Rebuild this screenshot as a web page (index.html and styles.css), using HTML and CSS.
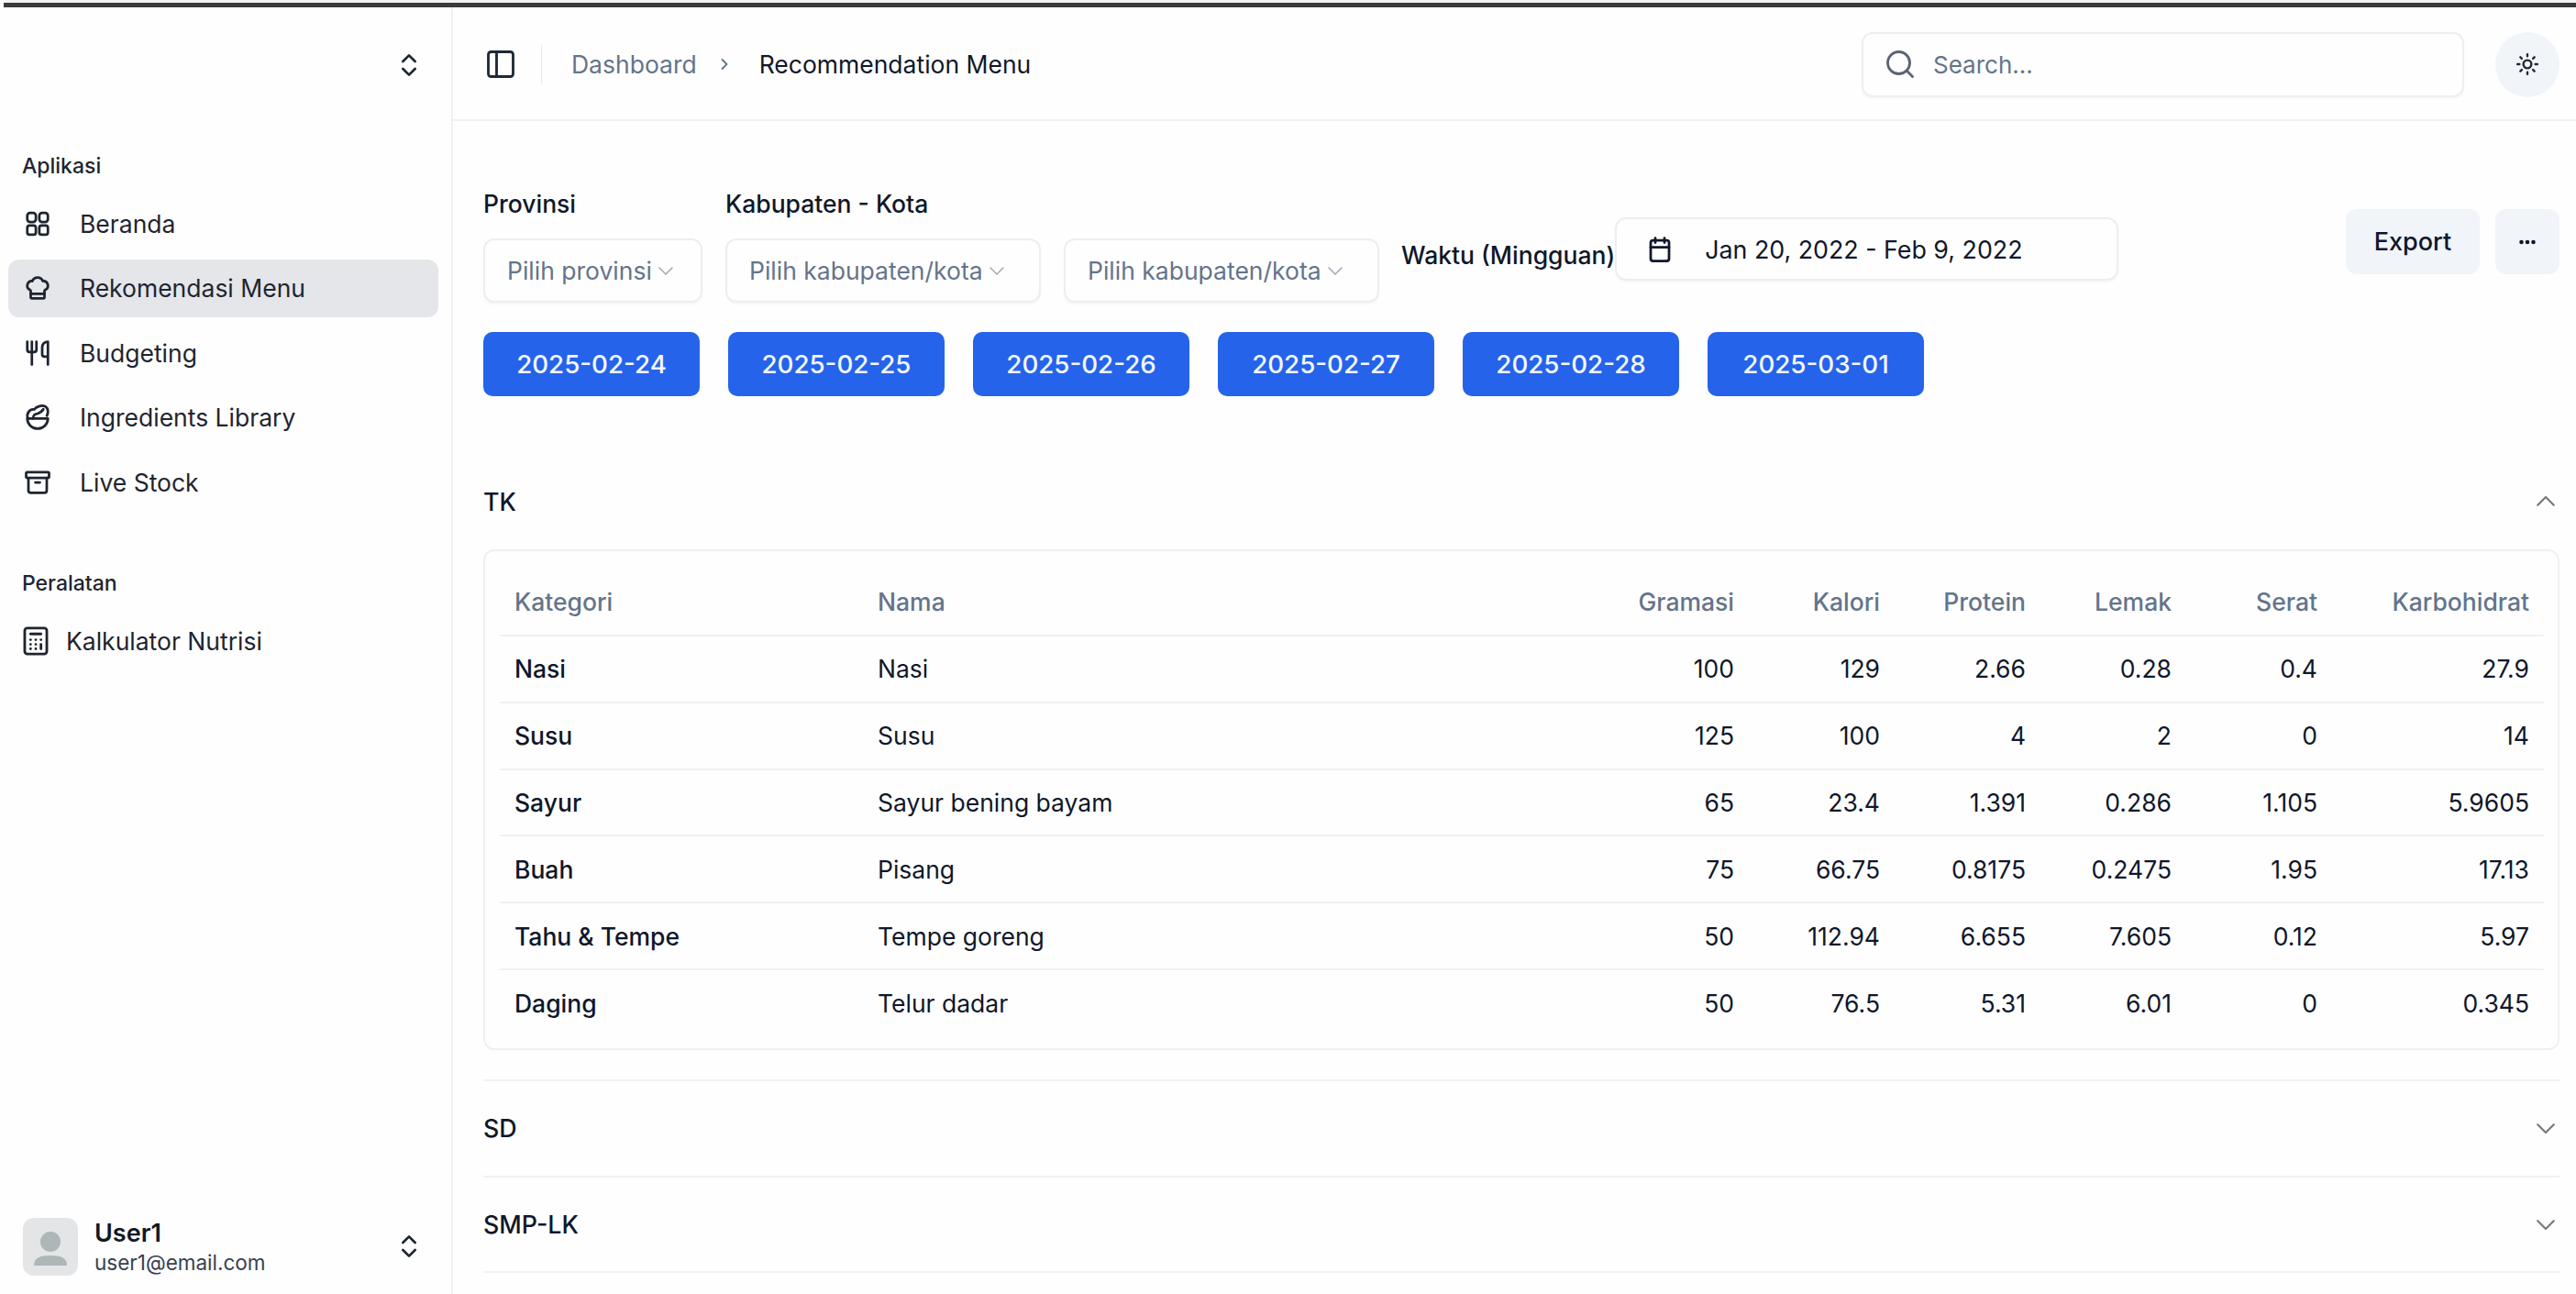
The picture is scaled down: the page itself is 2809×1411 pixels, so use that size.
FILE: index.html
```html
<!DOCTYPE html>
<html lang="id">
<head>
<meta charset="utf-8">
<title>Recommendation Menu</title>
<link rel="stylesheet" href="styles.css">
</head>
<body>
<div class="topstrip"></div>
<div class="app">
  <aside class="sidebar">
    <div class="brand">
      <svg class="ic updown" viewBox="0 0 24 24"><path d="m7 15 5 5 5-5"/><path d="m7 9 5-5 5 5"/></svg>
    </div>
    <div class="group-label">Aplikasi</div>
    <nav class="nav">
      <a class="item"><svg class="ic" viewBox="0 0 24 24"><rect x="3" y="2.5" width="7.5" height="8" rx="2.5"/><rect x="13.5" y="2.5" width="7.5" height="8" rx="2.5"/><rect x="3" y="13.5" width="7.5" height="8" rx="2"/><rect x="13.5" y="13.5" width="7.5" height="8" rx="2"/></svg><span>Beranda</span></a>
      <a class="item active"><svg class="ic" viewBox="0 0 24 24"><path d="M17 21a1 1 0 0 0 1-1v-5.35c0-.457.316-.844.727-1.041a4 4 0 0 0-2.134-7.589 5 5 0 0 0-9.186 0 4 4 0 0 0-2.134 7.588c.411.198.727.585.727 1.041V20a1 1 0 0 0 1 1Z"/><path d="M6 17h12"/></svg><span>Rekomendasi Menu</span></a>
      <a class="item"><svg class="ic" viewBox="0 0 24 24"><path d="M3 2v7c0 1.1.9 2 2 2h4a2 2 0 0 0 2-2V2"/><path d="M7 2v20"/><path d="M21 15V2a5 5 0 0 0-5 5v6c0 1.1.9 2 2 2h3Zm0 0v7"/></svg><span>Budgeting</span></a>
      <a class="item"><svg class="ic" viewBox="0 0 24 24"><path d="M3 13a9 9 0 0 0 18 0H3Z"/><path d="M3.4 13C2 8.5 5 4.8 9 5.2c2.2-3 7-4 10-2.5 2.2 1.6 2.7 5.2 1.1 8"/><path d="M8 13c0-3 2-4.2 4-4.2 2.2-.8 4-2 5-3.800"/></svg><span>Ingredients Library</span></a>
      <a class="item"><svg class="ic" viewBox="0 0 24 24"><rect x="2" y="3" width="20" height="5" rx="1"/><path d="M4 8v11a2 2 0 0 0 2 2h12a2 2 0 0 0 2-2V8"/><path d="M10 12h4"/></svg><span>Live Stock</span></a>
    </nav>
    <div class="group-label tools-label">Peralatan</div>
    <a class="item tool"><svg class="ic calc" viewBox="0 0 24 24"><rect x="3.5" y="2" width="17" height="20" rx="2"/><path d="M8 6.5h8"/><path d="M8 11h.01M12 11h.01M16 11h.01M8 14.5h.01M12 14.5h.01M8 18h.01M12 18h.01M16 14.5V18"/></svg><span>Kalkulator Nutrisi</span></a>
    <div class="user">
      <div class="avatar"><svg viewBox="0 0 60 63"><circle cx="30" cy="26" r="11"/><path d="M12 52c0-8 6-11 18-11s18 3 18 11Z"/></svg></div>
      <div class="user-text"><strong>User1</strong><span>user1@email.com</span></div>
      <svg class="ic updown" viewBox="0 0 24 24"><path d="m7 15 5 5 5-5"/><path d="m7 9 5-5 5 5"/></svg>
    </div>
  </aside>

  <div class="main">
    <header class="header">
      <svg class="ic panel" viewBox="0 0 24 24"><rect x="3" y="3" width="18" height="18" rx="2"/><path d="M9 3v18"/></svg>
      <span class="divider"></span>
      <span class="crumb">Dashboard</span>
      <svg class="ic crumb-sep" viewBox="0 0 24 24"><path d="m9 18 6-6-6-6"/></svg>
      <span class="crumb-current">Recommendation Menu</span>
      <div class="search">
        <svg class="ic search-ic" viewBox="0 0 24 24"><circle cx="11" cy="11" r="8"/><path d="m21 21-4.3-4.3"/></svg>
        <span>Search...</span>
      </div>
      <button class="theme"><svg class="ic ic-sm" viewBox="0 0 24 24"><circle cx="12" cy="12" r="4"/><path d="M12 2v2M12 20v2m-7.07-17.07 1.41 1.41m11.32 11.32 1.41 1.41M2 12h2m16 0h2M6.34 17.66l-1.41 1.41M19.07 4.93l-1.41 1.41"/></svg></button>
    </header>

    <main class="content">
      <div class="filters">
        <div class="field">
          <label class="field-label">Provinsi</label>
          <div class="select sel-prov"><span>Pilih provinsi</span><svg class="ic caret" viewBox="0 0 24 24"><path d="m5 9 7 7 7-7"/></svg></div>
        </div>
        <div class="field">
          <label class="field-label">Kabupaten - Kota</label>
          <div class="select sel-kab"><span>Pilih kabupaten/kota</span><svg class="ic caret" viewBox="0 0 24 24"><path d="m5 9 7 7 7-7"/></svg></div>
        </div>
        <div class="field">
          <label class="field-label">&nbsp;</label>
          <div class="select sel-kab"><span>Pilih kabupaten/kota</span><svg class="ic caret" viewBox="0 0 24 24"><path d="m5 9 7 7 7-7"/></svg></div>
        </div>
        <div class="waktu">
          <span class="waktu-label">Waktu (Mingguan)</span>
          <div class="datepicker">
            <svg class="ic cal" viewBox="0 0 24 24"><path d="M8 2v4M16 2v4"/><rect x="4" y="4" width="16" height="18" rx="2"/><path d="M4 10h16"/></svg>
            <span>Jan 20, 2022 - Feb 9, 2022</span>
          </div>
        </div>
        <div class="actions">
          <button class="btn-sec">Export</button>
          <button class="btn-sec btn-more"><svg class="ic ic-sm" viewBox="0 0 24 24"><circle cx="6" cy="12" r="1"/><circle cx="12" cy="12" r="1"/><circle cx="18" cy="12" r="1"/></svg></button>
        </div>
      </div>

      <div class="dates">
        <button class="date">2025-02-24</button>
        <button class="date">2025-02-25</button>
        <button class="date">2025-02-26</button>
        <button class="date">2025-02-27</button>
        <button class="date">2025-02-28</button>
        <button class="date">2025-03-01</button>
      </div>

      <section class="acc acc-open">
        <div class="acc-head"><span>TK</span><svg class="ic chev" viewBox="0 0 24 24"><path d="m5 15 7-7 7 7"/></svg></div>
        <div class="card">
          <table class="table">
            <colgroup><col class="c-kat"><col class="c-nama"><col class="c-num"><col class="c-num"><col class="c-num"><col class="c-num"><col class="c-num"><col class="c-last"></colgroup>
            <thead><tr><th>Kategori</th><th>Nama</th><th class="r">Gramasi</th><th class="r">Kalori</th><th class="r">Protein</th><th class="r">Lemak</th><th class="r">Serat</th><th class="r">Karbohidrat</th></tr></thead>
            <tbody>
              <tr><td class="b">Nasi</td><td>Nasi</td><td class="r">100</td><td class="r">129</td><td class="r">2.66</td><td class="r">0.28</td><td class="r">0.4</td><td class="r">27.9</td></tr>
              <tr><td class="b">Susu</td><td>Susu</td><td class="r">125</td><td class="r">100</td><td class="r">4</td><td class="r">2</td><td class="r">0</td><td class="r">14</td></tr>
              <tr><td class="b">Sayur</td><td>Sayur bening bayam</td><td class="r">65</td><td class="r">23.4</td><td class="r">1.391</td><td class="r">0.286</td><td class="r">1.105</td><td class="r">5.9605</td></tr>
              <tr><td class="b">Buah</td><td>Pisang</td><td class="r">75</td><td class="r">66.75</td><td class="r">0.8175</td><td class="r">0.2475</td><td class="r">1.95</td><td class="r">17.13</td></tr>
              <tr><td class="b">Tahu &amp; Tempe</td><td>Tempe goreng</td><td class="r">50</td><td class="r">112.94</td><td class="r">6.655</td><td class="r">7.605</td><td class="r">0.12</td><td class="r">5.97</td></tr>
              <tr><td class="b">Daging</td><td>Telur dadar</td><td class="r">50</td><td class="r">76.5</td><td class="r">5.31</td><td class="r">6.01</td><td class="r">0</td><td class="r">0.345</td></tr>
            </tbody>
          </table>
        </div>
      </section>
      <section class="acc">
        <div class="acc-head"><span>SD</span><svg class="ic chev" viewBox="0 0 24 24"><path d="m5 9 7 7 7-7"/></svg></div>
      </section>
      <section class="acc">
        <div class="acc-head"><span>SMP-LK</span><svg class="ic chev" viewBox="0 0 24 24"><path d="m5 9 7 7 7-7"/></svg></div>
      </section>
    </main>
  </div>
</div>
</body>
</html>
```
FILE: styles.css
```css
* { box-sizing: border-box; }
html, body { margin: 0; height: 100%; }
body {
  width: 2809px; height: 1411px; overflow: hidden;
  background: #fefefe; color: #0f172a;
  font-family: Inter, "Noto Sans", "Liberation Sans", sans-serif;
  font-size: 26.5px;
  display: flex; flex-direction: column;
}
button { font: inherit; border: 0; color: inherit; padding: 0; }

.topstrip { height: 8px; margin-left: 4px; border-top: 3px solid #f2f2f2; background: #3b3b3b; flex: none; }
.app { flex: 1; display: flex; min-height: 0; }

.ic { width: 30px; height: 30px; fill: none; stroke: currentColor; stroke-width: 2.2; stroke-linecap: round; stroke-linejoin: round; flex: none; }
.ic-sm { width: 26px; height: 26px; }
.updown { width: 32px; height: 32px; stroke-width: 2; }

.sidebar { width: 494px; flex: none; border-right: 2px solid #eff0f2; display: flex; flex-direction: column; color: #1e2530; }
.brand { height: 124px; padding: 2px 30px 0 0; display: flex; align-items: center; justify-content: flex-end; }
.group-label { font-size: 23px; font-weight: 500; padding-left: 24px; margin-top: 33px; line-height: 32px; }
.nav { display: flex; flex-direction: column; gap: 7.5px; margin-top: 15px; }
.item { display: flex; align-items: center; height: 63px; margin: 0 14px 0 9px; padding-left: 17px; gap: 31px; border-radius: 12px; }
.item.active { background: #e4e6ea; }
.tools-label { margin-top: 63px; }
.tool { gap: 16px; padding-left: 13px; margin-top: 15px; }
.calc { width: 34px; height: 34px; stroke-width: 2; }
.user { margin-top: auto; margin-bottom: 18px; display: flex; align-items: center; padding: 0 30px 0 25px; }
.avatar { width: 60px; height: 63px; border-radius: 12px; background: #e3e5e6; flex: none; }
.avatar svg { display: block; width: 100%; height: 100%; fill: #aeb6b8; }
.user-text { flex: 1; display: flex; flex-direction: column; margin-left: 18px; padding-top: 4px; line-height: 32px; }
.user-text strong { font-weight: 600; font-size: 27px; color: #111827; }
.user-text span { font-size: 22.5px; color: #374151; }

.main { flex: 1; min-width: 0; display: flex; flex-direction: column; }
.header { height: 124px; flex: none; border-bottom: 2px solid #f0f1f3; display: flex; align-items: center; padding: 2px 18px 0 34px; }
.panel { width: 36px; height: 36px; stroke-width: 1.9; color: #1f2937; }
.divider { width: 1px; height: 42px; background: #e7e8ea; margin: 0 32px 0 26px; }
.crumb { color: #64748b; }
.crumb-sep { width: 20px; height: 20px; margin: 0 28px 0 20px; color: #64748b; }
.crumb-current { color: #0f172a; }
.search { margin-left: auto; width: 657px; height: 71px; border: 2px solid #eceef1; border-radius: 12px; display: flex; align-items: center; padding-left: 22px; gap: 18px; font-size: 26px; color: #64748b; box-shadow: 0 2px 2px rgba(15,23,42,.03); }
.search-ic { width: 36px; height: 36px; stroke-width: 1.9; color: #5b6472; }
.theme { width: 70px; height: 71px; border-radius: 50%; background: #f1f4f8; margin-left: 34px; display: flex; align-items: center; justify-content: center; color: #1f2937; }

.content { flex: 1; min-height: 0; padding: 74px 18px 0 33px; }
.filters { display: flex; align-items: flex-start; gap: 25px; }
.field { display: flex; flex-direction: column; gap: 21px; }
.field-label { line-height: 33px; font-weight: 500; }
.select { height: 70px; border: 2px solid #eceef1; border-radius: 12px; display: flex; align-items: center; padding: 0 0 0 24px; gap: 3px; color: #64748b; box-shadow: 0 2px 2px rgba(15,23,42,.03); }
.sel-prov { width: 239px; }
.sel-kab { width: 344px; }
.caret { width: 24px; height: 24px; stroke-width: 1.4; color: #9aa3af; }
.waktu { display: flex; align-items: center; margin: 31px 0 0 -1px; }
.waktu-label { font-weight: 500; padding-top: 12px; white-space: nowrap; }
.datepicker { width: 549px; height: 69px; border: 2px solid #eceef1; border-radius: 12px; display: flex; align-items: center; padding-left: 32px; gap: 34px; font-size: 26.8px; box-shadow: 0 2px 2px rgba(15,23,42,.03); }
.actions { margin-left: auto; margin-top: 22px; display: flex; gap: 17px; }
.btn-sec { height: 71px; width: 146px; border-radius: 12px; background: #f1f4f8; font-size: 27px; font-weight: 500; }
.btn-more { width: 70px; display: flex; align-items: center; justify-content: center; }

.dates { display: flex; gap: 31px; margin-top: 32px; }
.date { width: 236px; height: 70px; border-radius: 10px; background: #2563eb; color: #f4f8ff; font-size: 27.7px; font-weight: 500; }

.acc { border-bottom: 2px solid #f0f1f3; }
.acc-open { margin-top: 63px; padding-bottom: 32px; }
.acc-head { height: 102.5px; display: flex; align-items: center; justify-content: space-between; font-size: 26.8px; font-weight: 500; }
.acc-open .acc-head { height: 104px; }
.chev { width: 30px; height: 30px; color: #777b82; stroke-width: 1.8; }

.card { height: 546px; border: 2px solid #eef0f2; border-radius: 12px; padding: 18px 15px 0 16px; }
.table { width: 100%; border-collapse: collapse; table-layout: fixed; }
.c-kat { width: 396px; }
.c-num { width: 159px; }
.c-last { width: 231px; }
.table th { height: 74px; font-weight: 500; color: #64748b; text-align: left; padding: 0 16px; border-bottom: 2px solid #eff0f3; }
.table td { height: 72.8px; padding: 0 16px; border-bottom: 2px solid #eff0f3; }
.table tbody tr:last-child td { border-bottom: 0; }
.table .r { text-align: right; }
.table .b { font-weight: 500; }
```
